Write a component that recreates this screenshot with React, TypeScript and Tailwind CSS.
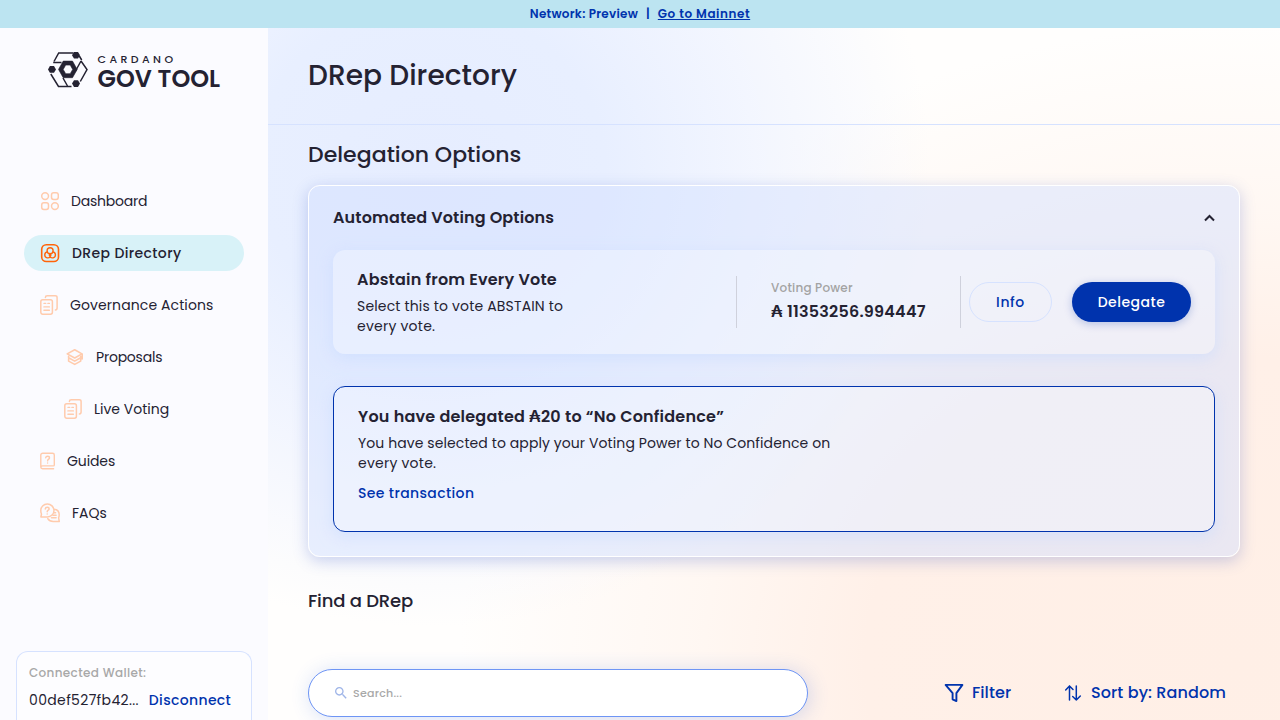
import type { ReactNode } from "react";

type IconProps = { className?: string };

function GridIcon() {
  return (
    <svg width="19" height="20" viewBox="0 0 19 20" fill="none" stroke="#FFCBAD" strokeWidth="1.5">
      <rect x="1.7" y="1.7" width="6.8" height="6.8" rx="3.4" />
      <rect x="11.5" y="1.7" width="6.8" height="6.8" rx="2.2" />
      <rect x="1.7" y="11.7" width="6.8" height="6.8" rx="2.2" />
      <rect x="11.5" y="11.7" width="6.8" height="6.8" rx="3.4" />
    </svg>
  );
}

function DRepIcon() {
  return (
    <svg width="20" height="20" viewBox="0 0 20 20" fill="none" stroke="#FF640A" strokeWidth="1.6">
      <rect x="1.7" y="1.7" width="16.8" height="16.8" rx="4.6" />
      <g strokeWidth="1.4">
        <circle cx="10.1" cy="7.8" r="3" />
        <path d="M7.500 8.900a3 3 0 1 0 3.100 4M12.700 8.900a3 3 0 1 1-3.100 4M10.100 10.800c-.7.6-.9 1.400-.5 2.100M10.100 10.800c.7.6.9 1.400.5 2.100" />
      </g>
    </svg>
  );
}

function DocsIcon() {
  return (
    <svg width="18" height="20" viewBox="0 0 18 20" fill="none" stroke="#FFCBAD" strokeWidth="1.5" strokeLinecap="round">
      <path d="M5.400 2.600V2.400C5.400 1.300 6.100.8 7.200.8h8.100c1.100 0 1.800.7 1.800 1.700v10.600c0 1.100-.6 1.800-1.700 1.800" />
      <rect x=".8" y="4.800" width="11.600" height="14.400" rx="1.900" />
      <path d="M4 8.400h1.700M7.900 8.400h1.500M3.900 11.900h5.500M3.900 15.300h5.500" strokeWidth="1.400" />
    </svg>
  );
}

function ProposalIcon() {
  return (
    <svg width="18" height="18" viewBox="0 0 18 18" fill="none" stroke="#FFCBAD" strokeWidth="1.600" strokeLinejoin="round" strokeLinecap="round">
      <path d="M8.700 1.700 16 5.900 8.700 10 1.200 5.900z" />
      <path d="M16.200 6.200V11M2.600 8.300v4.800l6.100 3.300 6-3.300V8.300M2.600 9.800l6.100 3.300 6-3.300" />
    </svg>
  );
}

function GuideIcon() {
  return (
    <svg width="15" height="18" viewBox="0 0 15 18" fill="none" stroke="#FFCBAD" strokeWidth="1.400" strokeLinecap="round" strokeLinejoin="round">
      <path d="M13.600 16.700H2.600C1.500 16.700.8 16 .8 15V3C.8 1.800 1.600 1.200 2.700 1.200H12.500c1.100 0 1.800.6 1.800 1.700V12.900c0 .7-.4 1-1 1H2.600C1.500 13.900.8 14.500.8 15.200" />
      <path d="M5.700 5.800c.1-1 .9-1.600 1.900-1.600s1.900.7 1.900 1.700c0 1.300-1.900 1.300-1.900 3M7.600 10.900v.1" />
    </svg>
  );
}

function FaqIcon() {
  return (
    <svg width="20" height="20" viewBox="0 0 20 20" fill="none" stroke="#FFCBAD" strokeWidth="1.500" strokeLinecap="round" strokeLinejoin="round">
      <path d="M.9 14 1.500 11C1 10 .8 9 .8 7.700A6.600 6.500 0 1 1 7.400 14z" />
      <path d="M5.300 5.900c.1-1 .9-1.600 1.900-1.600s1.900.7 1.900 1.700c0 1.200-1.900 1.200-1.900 2.700M7.200 10.900v.1" />
      <path d="M14.200 6.200c3 .3 5 2.700 5 5.600 0 1.200-.2 2.200-.6 3.100l.7 3.600h-6c-2.400 0-4.600-1.200-5.500-2.800M14 9.700h1.600M13 12.200h3.100M11.500 14.700h4.600" />
    </svg>
  );
}

function LogoMark() {
  return (
    <svg width="40" height="36" viewBox="0 0 40 36" fill="none" stroke="#242232" strokeWidth="1.500">
      <path d="M6 9.500 10.700.9h14.800M2.800 22 10.500 34.500h13M31.300 4 33.700 8M33 9 39 17.500 32.300 29.500" />
      <path d="M5.200 10.500H13.500M33 9 27.500 19M15 26l4.500 8" />
      <path
        fill="#242232"
        fillRule="evenodd"
        strokeWidth=".6"
        strokeLinejoin="round"
        d="M15.200 9.100h9.300l4.700 8.300-4.700 8.300h-9.300l-4.700-8.300zM17.700 13.100l-2.500 4.300 2.500 4.300h4.500l2.500-4.300-2.500-4.300z"
      />
      <g fill="#242232" stroke="none">
        <path d="M26 0h4l2 3.300-2 3.300h-4l-2-3.300z" />
        <path d="M1.900 14h4.100l2 3.400-2 3.400H1.900L0 17.400z" />
        <path d="M26 28.300h4l2 3.300-2 3.300h-4l-2-3.300z" />
      </g>
    </svg>
  );
}

function FilterIcon() {
  return (
    <svg width="20" height="20" viewBox="0 0 20 20" fill="none" stroke="#0033AD" strokeWidth="1.900" strokeLinejoin="round">
      <path d="M1.600 1.900h16.800l-6 8.200v8l-3.800-1.800v-6.200z" />
    </svg>
  );
}

function SortIcon() {
  return (
    <svg width="18" height="18" viewBox="0 0 18 18" fill="none" stroke="#0033AD" strokeWidth="1.500" strokeLinecap="round" strokeLinejoin="round">
      <path d="M5.500 16V2M1.700 6l3.800-4 3.500 3.500M12.300 2v14M8.700 12.500l3.600 3.500 4-4" />
    </svg>
  );
}

function SearchIcon({ className }: IconProps) {
  return (
    <svg className={className} width="16" height="16" viewBox="0 0 24 24" fill="#9FB5E8">
      <path d="M15.500 14h-.79l-.28-.27C15.410 12.590 16 11.110 16 9.500 16 5.910 13.090 3 9.500 3S3 5.910 3 9.500 5.910 16 9.500 16c1.610 0 3.090-.59 4.230-1.570l.27.28v.79l5 4.990L20.490 19zm-6 0C7.010 14 5 11.990 5 9.500S7.010 5 9.500 5 14 7.010 14 9.500 11.990 14 9.500 14" />
    </svg>
  );
}

function NavItem({ icon, active, indent, children }: { icon: ReactNode; active?: boolean; indent?: string; children: ReactNode }) {
  return (
    <a
      className={`flex h-9 items-center gap-3 rounded-full text-[14px] whitespace-nowrap ${indent ?? "pl-4"} ${
        active ? "bg-[#D8F2F8] font-medium" : ""
      }`}
    >
      {icon}
      {children}
    </a>
  );
}

function Sidebar() {
  return (
    <aside className="flex w-[268px] shrink-0 flex-col bg-[#FBFBFF]">
      <div className="flex h-[155px] gap-[9.5px] pt-6 pl-12">
        <LogoMark />
        <div className="whitespace-nowrap">
          <div className="h-[15px] text-[11px] leading-[15px] font-medium tracking-[3.400px]">CARDANO</div>
          <div className="text-[24px] leading-[23px] font-semibold">GOV TOOL</div>
        </div>
      </div>
      <nav className="flex flex-col gap-4 px-6">
        <NavItem icon={<GridIcon />}><span className="tracking-[-0.220px]">Dashboard</span></NavItem>
        <NavItem icon={<DRepIcon />} active><span className="tracking-[0.370px]">DRep Directory</span></NavItem>
        <NavItem icon={<DocsIcon />}><span className="tracking-[0.100px]">Governance Actions</span></NavItem>
        <NavItem icon={<ProposalIcon />} indent="pl-[42px]"><span className="tracking-[-0.220px]">Proposals</span></NavItem>
        <NavItem icon={<DocsIcon />} indent="pl-10">Live Voting</NavItem>
        <NavItem icon={<GuideIcon />}><span className="tracking-[-0.100px]">Guides</span></NavItem>
        <NavItem icon={<FaqIcon />}>FAQs</NavItem>
      </nav>
      <div className="mx-4 mt-auto h-[69px] rounded-t-xl border border-b-0 border-[#D6E2FF] bg-white/60 px-3 pt-3">
        <div className="text-[12px] leading-[18px] font-medium tracking-[0.340px] text-[#A8A8A8]">Connected Wallet:</div>
        <div className="mt-[7px] flex items-center gap-[10px] text-[14px] leading-[22px] whitespace-nowrap">
          <span className="tracking-[0.350px]">00def527fb42...</span>
          <span className="font-medium tracking-[0.350px] text-[#0033AD]">Disconnect</span>
        </div>
      </div>
    </aside>
  );
}

function AbstainCard() {
  return (
    <div className="flex h-[104px] items-center rounded-xl bg-white/30 px-6 shadow-[0px_4px_15px_0px_rgba(200,218,255,0.6)]">
      <div className="w-[379px]">
        <h3 className="text-[16px] leading-6 font-semibold tracking-[0.200px]">Abstain from Every Vote</h3>
        <p className="mt-1 text-[14px] leading-5 tracking-[0.160px]">
          Select this to vote ABSTAIN to
          <br />
          <span className="tracking-[0.240px]">every vote.</span>
        </p>
      </div>
      <div className="flex h-[52px] w-[225px] flex-col justify-center border-x border-[#CFD1DC] pl-[34px]">
        <div className="text-[12px] leading-4 font-medium tracking-[0.200px] text-[#A3A3A3]">Voting Power</div>
        <div className="mt-1 text-[16px] leading-6 font-semibold tracking-[0.220px] whitespace-nowrap">₳ 11353256.994447</div>
      </div>
      <button className="ml-2 h-10 w-[83px] rounded-full border border-[#D6E2FF] text-[14px] font-medium tracking-[0.600px] text-[#0033AD]">Info</button>
      <button className="ml-5 h-10 w-[119px] rounded-full bg-[#0033AD] text-[14px] font-medium tracking-[0.480px] text-white shadow-[0px_2px_8px_0px_rgba(0,51,173,0.25)]">
        Delegate
      </button>
    </div>
  );
}

function DelegatedCard() {
  return (
    <div className="mt-8 h-[146px] rounded-xl border border-[#0033AD] bg-white/30 px-6 pt-[18px] shadow-[0px_4px_15px_0px_rgba(200,218,255,0.6)]">
      <h3 className="text-[16px] leading-6 font-semibold tracking-[0.220px]">You have delegated ₳20 to “No Confidence”</h3>
      <p className="mt-1 text-[14px] leading-5 tracking-[0.090px]">
        You have selected to apply your Voting Power to No Confidence on
        <br />
        <span className="tracking-[0.240px]">every vote.</span>
      </p>
      <a className="mt-[9px] block text-[14px] leading-[22px] font-medium tracking-[0.370px] text-[#0033AD]">See transaction</a>
    </div>
  );
}

export default function App() {
  return (
    <div className="flex h-[720px] w-[1280px] flex-col overflow-hidden bg-white font-['Poppins','Inter',sans-serif] text-[#242232]">
      <div className="flex h-7 shrink-0 items-center justify-center bg-[#BCE4F1] text-[12px] font-semibold text-[#0033AD]">
        <span className="tracking-[0.260px]">Network: Preview</span>
        <span className="mx-2">|</span>
        <span className="tracking-[0.560px] underline">Go to Mainnet</span>
      </div>
      <div className="flex min-h-0 flex-1">
        <Sidebar />
        <main className="flex min-w-0 flex-1 flex-col bg-[#FFFEFD] bg-[radial-gradient(ellipse_500px_460px_at_16%_20%,#E6EDFF_0%,#E8EFFF_35%,rgba(240,244,255,0.8)_65%,rgba(255,255,255,0)_100%),radial-gradient(ellipse_780px_640px_at_96%_92%,#FFEFE6_0%,#FFF0E8_48%,rgba(255,244,237,0.65)_70%,rgba(255,255,255,0)_100%)]">
          <header className="flex h-[97px] shrink-0 items-center border-b border-[#D6E2FF] pl-10">
            <h1 className="pb-px text-[28px] leading-[42px] font-medium tracking-[0.040px]">DRep Directory</h1>
          </header>
          <div className="flex flex-col px-10">
            <h2 className="mt-[13px] text-[22px] leading-[34px] font-medium tracking-[0.040px]">Delegation Options</h2>
            <section className="mt-[13px] h-[372px] rounded-xl border border-white bg-[rgba(210,223,255,0.47)] px-6 shadow-[0px_4px_15px_0px_rgba(47,80,190,0.25)]">
              <div className="flex h-16 items-center justify-between">
                <h3 className="text-[16px] leading-6 font-semibold tracking-[0.140px]">Automated Voting Options</h3>
                <svg width="11" height="8" viewBox="0 0 11 8" fill="none" stroke="#242232" strokeWidth="2">
                  <path d="M1 6.500 5.500 2 10 6.500" />
                </svg>
              </div>
              <AbstainCard />
              <DelegatedCard />
            </section>
            <h2 className="mt-[30px] text-[18px] leading-7 font-medium tracking-[-0.170px]">Find a DRep</h2>
            <div className="mt-[54px] flex items-center">
              <div className="flex h-12 w-[500px] items-center rounded-full border border-[#6E95F5] bg-white pl-6 shadow-[2px_2px_20px_0px_rgba(47,98,220,0.2)]">
                <SearchIcon />
                <span className="ml-1 text-[11px] font-medium tracking-[0.260px] text-[#A8A8A8]">Search...</span>
              </div>
              <button className="ml-[136px] flex w-[120px] items-center gap-2 text-[16px] font-medium text-[#0033AD]">
                <FilterIcon />
                <span className="tracking-[0.080px]">Filter</span>
              </button>
              <button className="flex items-center gap-[9px] text-[16px] font-medium whitespace-nowrap text-[#0033AD]">
                <SortIcon />
                <span className="tracking-[0.110px]">Sort by: Random</span>
              </button>
            </div>
          </div>
        </main>
      </div>
    </div>
  );
}
